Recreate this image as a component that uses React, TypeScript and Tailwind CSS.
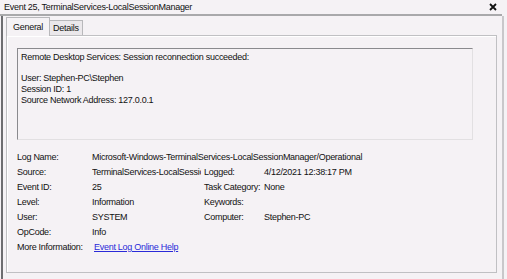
const font = { fontFamily: '"Liberation Sans", Arial, sans-serif', letterSpacing: "-0.28px" };

const rows = [
    { label: "Log Name:", value: "Microsoft-Windows-TerminalServices-LocalSessionManager/Operational", wide: true },
    { label: "Source:", value: "TerminalServices-LocalSessionManager", label2: "Logged:", value2: "4/12/2021 12:38:17 PM" },
    { label: "Event ID:", value: "25", label2: "Task Category:", value2: "None" },
    { label: "Level:", value: "Information", label2: "Keywords:", value2: "" },
    { label: "User:", value: "SYSTEM", label2: "Computer:", value2: "Stephen-PC" },
    { label: "OpCode:", value: "Info" },
];

export default function App() {
    return (
        <div className="w-[507px] h-[279px] bg-[#f5f2f5] text-[9px] text-[#111] overflow-hidden whitespace-nowrap" style={font}>
            {/* Title */}
            <div className="h-[14px] flex items-center justify-between pl-[4px] pr-[10px]">
                <span className="leading-none">Event 25, TerminalServices-LocalSessionManager</span>
                <svg width="8" height="8" viewBox="0 0 8 8">
                    <path d="M1 1 L7 7 M7 1 L1 7" stroke="#111" strokeWidth="1.8" />
                </svg>
            </div>
            <div className="h-[2px] w-[502px] bg-[#a9a9ab]" />

            <div className="flex h-[263px]">
                <div className="w-[2px] ml-[1px] bg-[#6d6d70]" />
                <div className="flex-1 flex flex-col pl-[3px] pr-[5px]">
                    {/* Tabs */}
                    <div className="flex items-end h-[19px] shrink-0">
                        <div className="h-[19px] px-[6px] pt-[3px] bg-[#f5f2f5] border border-b-0 border-[#b8b8bb] relative z-10 -mb-px">
                            General
                        </div>
                        <div className="h-[15px] px-[3px] pt-[1px] bg-[#ebe8eb] border border-l-0 border-b-0 border-[#b8b8bb]">
                            Details
                        </div>
                    </div>
                    {/* Panel */}
                    <div className="w-[491px] h-[238px] shrink-0 border border-[#c0c0c3] shadow-[inset_1px_1px_0_#ffffff] flex flex-col pl-[10px] pt-[12px]">
                        <div className="w-[456px] h-[92px] shrink-0 border-l border-t border-[#8a8a8e] border-r border-b border-r-[#e2e0e2] border-b-[#e2e0e2] px-[3px] pt-[3px] leading-[10.7px]">
                            <div>Remote Desktop Services: Session reconnection succeeded:</div>
                            <div className="h-[10.7px]" />
                            <div>User: Stephen-PC\Stephen</div>
                            <div>Session ID: 1</div>
                            <div>Source Network Address: 127.0.0.1</div>
                        </div>
                        <div className="mt-[10px] flex flex-col leading-[15px]">
                            {rows.map((r, i) => (
                                <div key={i} className="flex">
                                    <div className="w-[75px] shrink-0">{r.label}</div>
                                    <div className={r.wide ? "" : "w-[109px] mr-[3px] shrink-0 overflow-hidden"}>{r.value}</div>
                                    {r.label2 && <div className="w-[60px] shrink-0">{r.label2}</div>}
                                    {r.label2 && <div>{r.value2}</div>}
                                </div>
                            ))}
                            <div className="flex">
                                <div className="w-[77px] shrink-0">More Information:</div>
                                <span className="text-[#2a2ad8] underline">Event Log Online Help</span>
                            </div>
                        </div>
                    </div>
                </div>
                <div className="w-[2px] mr-[3px] bg-[#c9c7ca]" />
            </div>
        </div>
    );
}
